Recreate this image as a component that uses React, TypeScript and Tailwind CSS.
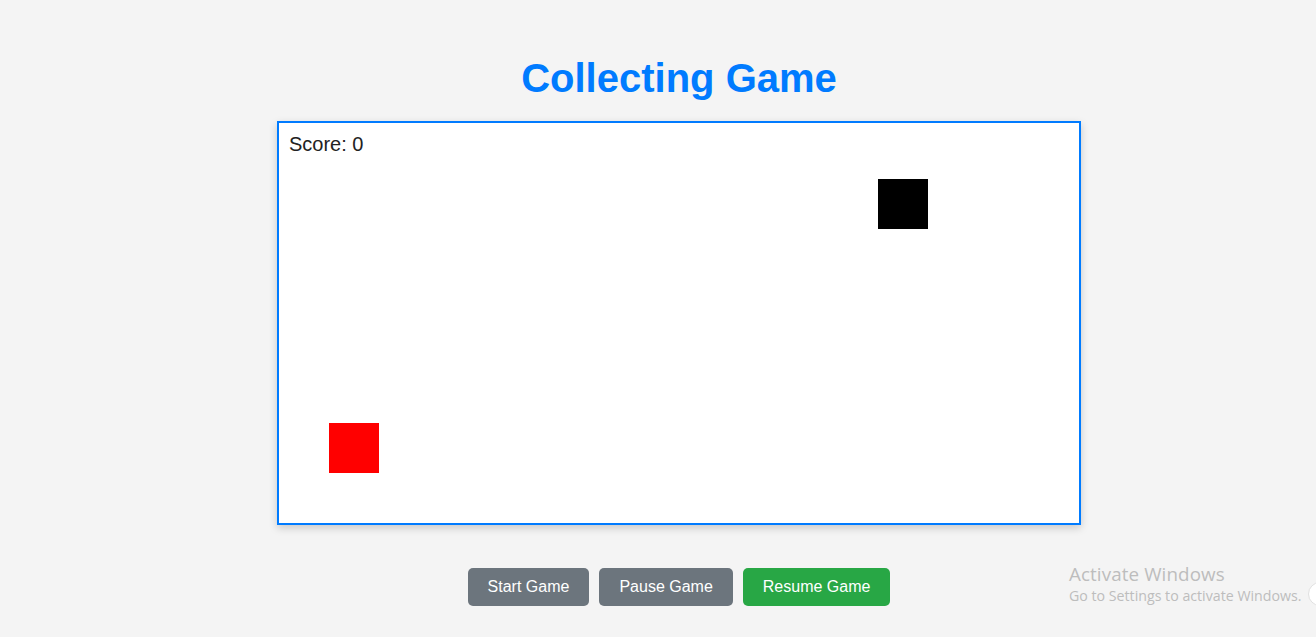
import React from "react";

export default function App() {
  return (
    <div
      className="relative min-h-[637px] w-full overflow-hidden bg-[#f4f4f4] flex flex-col items-center pt-[55px] pl-[42px]"
      style={{ fontFamily: '"Liberation Sans", Arial, sans-serif' }}
    >
      <h1 className="text-[40px] leading-[46px] font-bold text-[#007bff] m-0">
        Collecting Game
      </h1>
      <div className="relative mt-[20px] w-[804px] h-[404px] border-2 border-[#007bff] bg-white shadow-[0_3px_8px_rgba(0,0,0,0.18)]">
        <div className="absolute left-[10px] top-[10px] text-[20px] leading-[23px] text-[#222]">
          Score: 0
        </div>
        <div className="absolute left-[599px] top-[56px] w-[50px] h-[50px] bg-black" />
        <div className="absolute left-[50px] top-[300px] w-[50px] h-[50px] bg-[#ff0000]" />
      </div>
      <div className="mt-[43px] flex gap-[10px]">
        <button className="px-[20px] py-[10px] text-[16px] leading-[18px] text-white bg-[#6c757d] rounded-[5px]">
          Start Game
        </button>
        <button className="px-[20px] py-[10px] text-[16px] leading-[18px] text-white bg-[#6c757d] rounded-[5px]">
          Pause Game
        </button>
        <button className="px-[20px] py-[10px] text-[16px] leading-[18px] text-white bg-[#28a745] rounded-[5px]">
          Resume Game
        </button>
      </div>
      <div
        className="absolute left-[1069px] top-[562px] text-[#bdbdbd]"
        style={{ fontFamily: '"Open Sans", "Noto Sans", sans-serif' }}
      >
        <div className="text-[18.8px] leading-[25px] tracking-[0.1px]">Activate Windows</div>
        <div className="text-[14.2px] leading-[18px]">Go to Settings to activate Windows.</div>
      </div>
      <div className="absolute left-[1308px] top-[582px] w-[24px] h-[24px] rounded-full bg-white border border-[#e0e0e0]" />
    </div>
  );
}
